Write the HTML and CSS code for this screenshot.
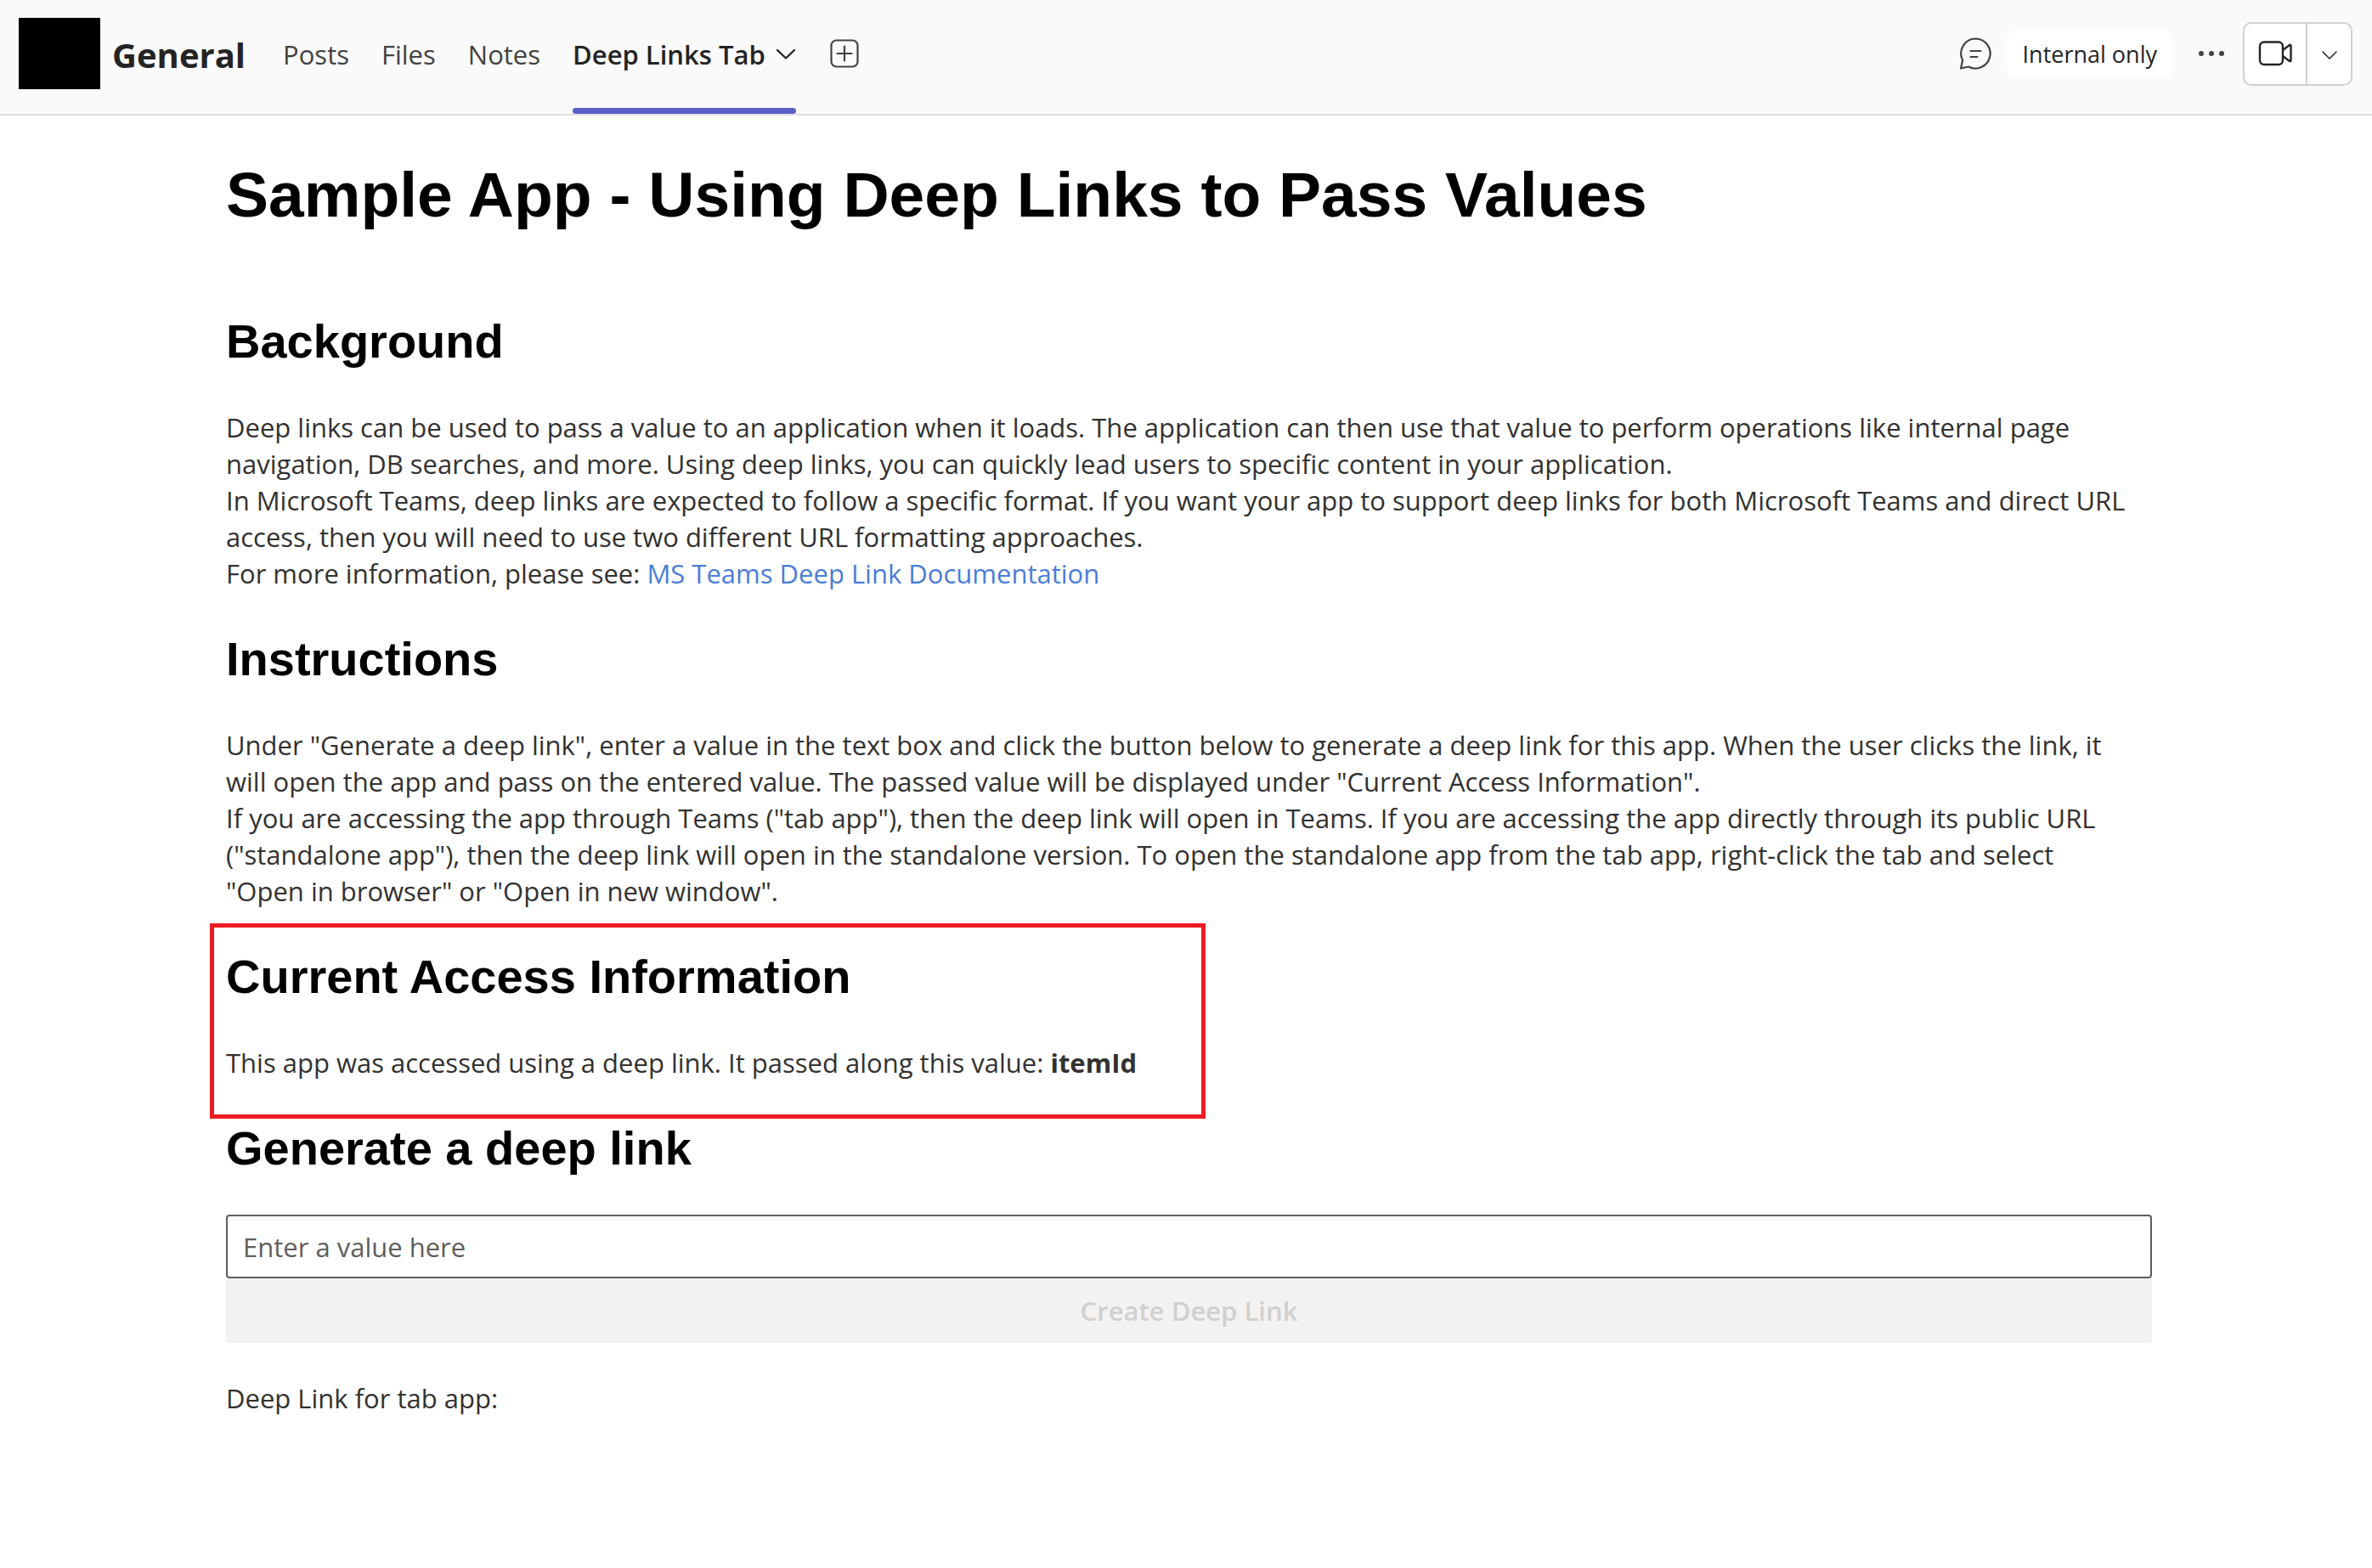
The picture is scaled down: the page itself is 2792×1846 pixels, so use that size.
FILE: index.html
```html
<!DOCTYPE html>
<html lang="en">
<head>
<meta charset="utf-8">
<title>Deep Links Tab</title>
<link rel="stylesheet" href="styles.css">
</head>
<body>
<header class="bar">
  <div class="avatar"></div>
  <div class="channel">General</div>
  <nav class="tabs">
    <a class="tab" href="#posts">Posts</a>
    <a class="tab" href="#files">Files</a>
    <a class="tab" href="#notes">Notes</a>
    <a class="tab tab-active" href="#deep-links">Deep Links Tab
      <svg width="24" height="14" viewBox="0 0 24 14" fill="none" stroke="currentColor" stroke-width="2.4" stroke-linecap="round" stroke-linejoin="round"><path d="M2 2 12 11.500 22 2"/></svg>
    </a>
  </nav>
  <button class="icon-button" type="button" aria-label="Add a tab">
    <svg width="34" height="34" viewBox="0 0 34 34" fill="none" stroke="#424242" stroke-width="2.2" stroke-linecap="round"><rect x="1.5" y="1.5" width="31" height="31" rx="6"/><path d="M17 8.500v17M8.500 17h17"/></svg>
  </button>
  <div class="actions">
    <button class="icon-button" type="button" aria-label="Open chat">
      <svg width="40" height="40" viewBox="0 0 40 40" fill="none" stroke="#424242" stroke-width="2.2" stroke-linecap="round" stroke-linejoin="round"><path d="M20.500 2.500a17.500 17.500 0 1 1-8.500 33L3 37.500l2.200-9.500A17.500 17.500 0 0 1 20.500 2.500Z"/><path d="M14.500 17h12M14.500 24h8"/></svg>
    </button>
    <button class="pill" type="button">Internal only</button>
    <button class="icon-button dots" type="button" aria-label="More options">
      <svg width="30" height="8" viewBox="0 0 30 8" fill="#424242"><circle cx="3" cy="4" r="3"/><circle cx="15" cy="4" r="3"/><circle cx="27" cy="4" r="3"/></svg>
    </button>
    <div class="split">
      <button class="meet" type="button" aria-label="Meet now">
        <svg width="40" height="32" viewBox="0 0 40 32" fill="none" stroke="#242424" stroke-width="2.4" stroke-linejoin="round"><rect x="2" y="2.500" width="27" height="26.500" rx="5"/><path d="M29 12l8-6q1.500-.5 1.500 1v17q0 1.500-1.500 1l-8-6"/></svg>
      </button>
      <button class="meet-menu" type="button" aria-label="Meeting options">
        <svg width="20" height="12" viewBox="0 0 20 12" fill="none" stroke="#242424" stroke-width="1.600" stroke-linecap="round" stroke-linejoin="round"><path d="M2 2l8 8 8-8"/></svg>
      </button>
    </div>
  </div>
</header>
<main class="content">
  <h1>Sample App - Using Deep Links to Pass Values</h1>
  <section>
    <h2>Background</h2>
    <p>Deep links can be used to pass a value to an application when it loads. The application can then use that value to perform operations like internal page navigation, DB searches, and more. Using deep links, you can quickly lead users to specific content in your application.</p>
    <p>In Microsoft Teams, deep links are expected to follow a specific format. If you want your app to support deep links for both Microsoft Teams and direct URL access, then you will need to use two different URL formatting approaches.</p>
    <p>For more information, please see: <a class="link" href="#docs">MS Teams Deep Link Documentation</a></p>
  </section>
  <section>
    <h2>Instructions</h2>
    <p>Under "Generate a deep link", enter a value in the text box and click the button below to generate a deep link for this app. When the user clicks the link, it will open the app and pass on the entered value. The passed value will be displayed under "Current Access Information".</p>
    <p>If you are accessing the app through Teams ("tab app"), then the deep link will open in Teams. If you are accessing the app directly through its public URL ("standalone app"), then the deep link will open in the standalone version. To open the standalone app from the tab app, right-click the tab and select "Open in browser" or "Open in new window".</p>
  </section>
  <section class="marked">
    <h2>Current Access Information</h2>
    <p>This app was accessed using a deep link. It passed along this value: <strong>itemId</strong></p>
  </section>
  <form class="generator">
    <h2>Generate a deep link</h2>
    <input class="field" type="text" aria-label="Deep link value" placeholder="Enter a value here">
    <button class="create" type="button" disabled>Create Deep Link</button>
    <p class="result">Deep Link for tab app:</p>
  </form>
</main>
</body>
</html>
```
FILE: styles.css
```css
*,
*::before,
*::after { box-sizing: border-box; }

body {
  margin: 0;
  background: #fff;
  color: #323130;
  font-family: "Open Sans", "Noto Sans", sans-serif;
  font-size: 31px;
  line-height: 43px;
}

button {
  margin: 0;
  padding: 0;
  border: 0;
  background: none;
  font: inherit;
  color: inherit;
}

svg { display: block; flex: none; }

/* Channel bar */
.bar {
  display: flex;
  align-items: center;
  height: 136px;
  padding: 0 23px 8px 22px;
  background: #fafafa;
  border-bottom: 2px solid #e0e0e0;
}

.avatar {
  width: 96px;
  height: 84px;
  background: #000;
}

.channel {
  margin-left: 14px;
  padding-top: 2px;
  color: #242424;
  font-size: 40px;
  font-weight: 700;
}

.tabs {
  display: flex;
  gap: 38px;
  margin: 0 40px 0 44px;
}

.tab {
  position: relative;
  display: flex;
  align-items: center;
  gap: 12px;
  padding-top: 2px;
  color: #424242;
  text-decoration: none;
}

.tab-active {
  color: #242424;
  font-weight: 600;
}

.tab-active::after {
  content: "";
  position: absolute;
  left: 0;
  right: 0;
  bottom: -48px;
  height: 7px;
  border-radius: 4px;
  background: #5b5fc7;
}

.actions {
  display: flex;
  align-items: center;
  margin-left: auto;
}

.pill {
  height: 57px;
  margin-left: 18px;
  padding: 0 18px;
  border-radius: 10px;
  background: #fff;
  color: #242424;
  font-size: 27px;
}

.dots { margin: 0 22px 0 31px; }

.split {
  display: flex;
  height: 75px;
  border: 2px solid #d1d1d1;
  border-radius: 10px;
  background: #fff;
}

.meet,
.meet-menu {
  display: flex;
  align-items: center;
  justify-content: center;
}

.meet { width: 72px; }

.meet-menu {
  width: 53px;
  padding-top: 4px;
  border-left: 2px solid #d1d1d1;
}

/* Page */
.content { padding: 50px 259px 48px 266px; }

h1,
h2 {
  margin: 0;
  color: #000;
  font-family: "Liberation Sans", Arial, sans-serif;
  font-weight: 700;
}

h1 {
  margin-bottom: 98px;
  font-size: 75px;
  line-height: 86px;
}

h2 {
  margin-bottom: 48px;
  font-size: 56px;
  line-height: 64px;
}

p {
  margin: 0;
  padding-right: 24px;
}

section { margin-bottom: 47px; }

.link {
  color: #4a7dd6;
  text-decoration: none;
}

.marked { position: relative; }

.marked::after {
  content: "";
  position: absolute;
  top: -31px;
  left: -19px;
  width: 1172px;
  height: 230px;
  border: 5px solid #ed1c24;
}

.generator {
  display: flex;
  flex-direction: column;
}

.generator h2 { margin-bottom: 46px; }

.field {
  height: 75px;
  padding: 0 18px;
  border: 2px solid #605e5c;
  border-radius: 4px;
  background: #fff;
  color: inherit;
  font: inherit;
}

.field::placeholder { color: #605e5c; opacity: 1; }

.create {
  height: 76px;
  border-radius: 4px;
  background: #f3f2f1;
  color: #d2d0ce;
  font-weight: 600;
}

.result { margin-top: 44px; }
```
